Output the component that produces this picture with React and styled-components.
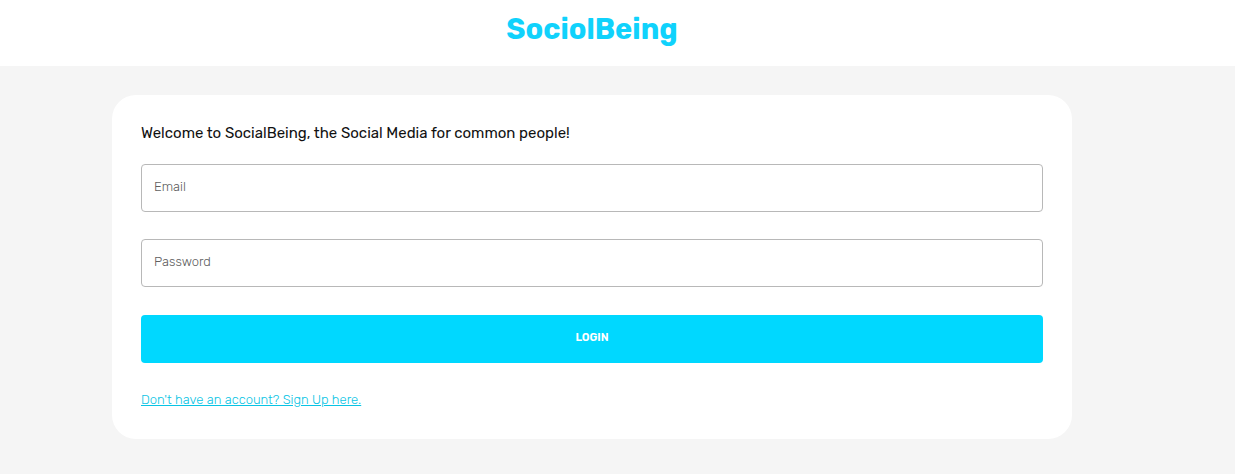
import React from "react";
import styled, { createGlobalStyle } from "styled-components";

const Global = createGlobalStyle`
  *, *::before, *::after { box-sizing: border-box; }
  body {
    margin: 0;
    background: #f5f5f5;
    color: #111;
    font-family: Rubik, Roboto, "Liberation Sans", sans-serif;
    font-size: 13px;
    font-weight: 300;
    line-height: 20px;
  }
`;

const Header = styled.header`
  display: flex;
  justify-content: center;
  padding: 11px 51px 19px 0;
  background: #fff;
`;

const Brand = styled.h1`
  margin: 0;
  color: #10d2fc;
  font-size: 29px;
  font-weight: 700;
  line-height: 36px;
`;

const Main = styled.main`
  padding: 29px 163px 35px 112px;
`;

const Card = styled.form`
  display: flex;
  flex-direction: column;
  padding: 28px 29px 29px;
  border-radius: 24px;
  background: #fff;
`;

const Title = styled.h2`
  margin: 0 0 21px;
  font-size: 15px;
  font-weight: 400;
  line-height: 20px;
`;

const Field = styled.input`
  height: 48px;
  margin-bottom: 27px;
  padding: 0 12px 3px;
  border: 1px solid #b8b8b8;
  border-radius: 4px;
  background: #fff;
  color: inherit;
  font: inherit;
  &::placeholder { color: #606060; opacity: 1; }
`;

const Submit = styled.button`
  height: 48px;
  margin: 1px 0 27px;
  padding: 0 0 3px;
  border: 0;
  border-radius: 4px;
  background: #00d8ff;
  color: #fff;
  font: inherit;
  font-size: 11px;
  font-weight: 600;
  cursor: pointer;
`;

const SignUp = styled.a`
  align-self: flex-start;
  color: #08c4e4;
  text-decoration: underline;
`;

export default function App() {
  return (
    <>
      <Global />
      <Header><Brand>SociolBeing</Brand></Header>
      <Main>
        <Card onSubmit={(e) => e.preventDefault()}>
          <Title>Welcome to SocialBeing, the Social Media for common people!</Title>
          <Field type="email" placeholder="Email" aria-label="Email" />
          <Field type="password" placeholder="Password" aria-label="Password" />
          <Submit type="submit">LOGIN</Submit>
          <SignUp href="#signup">Don't have an account? Sign Up here.</SignUp>
        </Card>
      </Main>
    </>
  );
}
